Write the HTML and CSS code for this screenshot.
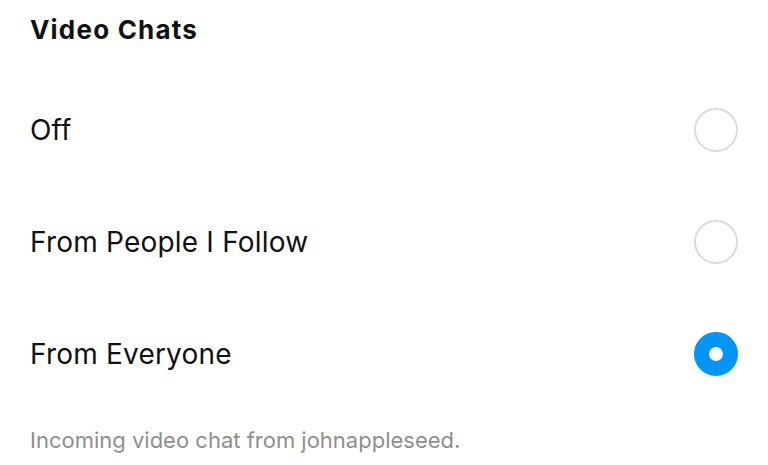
FILE: index.html
```html
<!DOCTYPE html>
<html lang="en">
<head>
  <meta charset="UTF-8" />
  <title>Video Chats</title>
  <link rel="stylesheet" href="styles.css">
</head>
<body>
  <div class="settings">
    <h2 class="section-title">Video Chats</h2>

    <div class="option">
      <span class="option-label">Off</span>
      <span class="radio"></span>
    </div>
    <div class="option">
      <span class="option-label">From People I Follow</span>
      <span class="radio"></span>
    </div>
    <div class="option">
      <span class="option-label">From Everyone</span>
      <span class="radio checked"></span>
    </div>

    <p class="hint">Incoming video chat from johnappleseed.</p>
  </div>
</body>
</html>
```

FILE: styles.css
```css
body {
  margin: 0;
  background: #fff;
  font-family: Inter, "Noto Sans", sans-serif;
  color: #111;
}
.settings {
  padding: 0 30px;
}
.section-title {
  margin: 0;
  height: 60px;
  line-height: 60px;
  font-size: 26px;
  font-weight: 700;
  letter-spacing: 1.2px;
}
.option {
  height: 112px;
  display: flex;
  align-items: center;
  justify-content: space-between;
}
.option:first-of-type {
  margin-top: 14px;
}
.option-label {
  font-size: 28px;
  letter-spacing: 0.2px;
}
.radio {
  width: 44px;
  height: 44px;
  box-sizing: border-box;
  border: 2px solid #dbdbdb;
  border-radius: 50%;
}
.radio.checked {
  border: 15px solid #0095f6;
  background: #fff;
}
.hint {
  margin: 15px 0 0;
  line-height: 30px;
  font-size: 22px;
  color: #8e8e8e;
}
```
